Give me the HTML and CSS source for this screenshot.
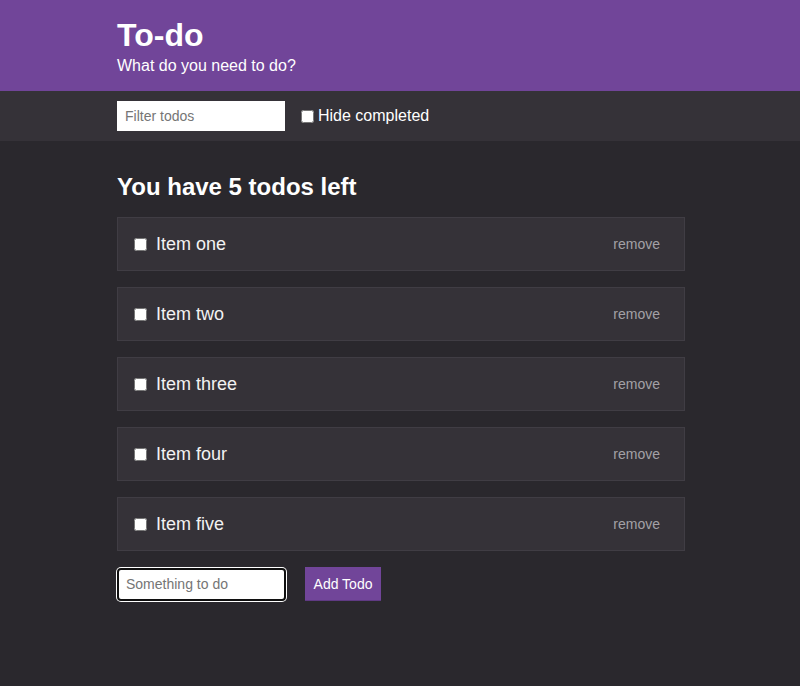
FILE: index.html
```html
<!DOCTYPE html>
<html>
<head>
<meta charset="utf-8">
<link rel="stylesheet" href="styles.css">
</head>
<body>
<header class="hero">
  <div class="wrap">
    <h1 class="title">To-do</h1>
    <p class="subtitle">What do you need to do?</p>
  </div>
</header>
<div class="filterbar">
  <div class="wrap filter-row">
    <input class="filter-input" type="text" placeholder="Filter todos">
    <label class="hide-label"><input type="checkbox" class="cb"> Hide completed</label>
  </div>
</div>
<main class="wrap main">
  <h2 class="count">You have 5 todos left</h2>
  <ul class="list">
    <li class="item"><label class="item-label"><input type="checkbox" class="cb"><span>Item one</span></label><button class="remove">remove</button></li>
    <li class="item"><label class="item-label"><input type="checkbox" class="cb"><span>Item two</span></label><button class="remove">remove</button></li>
    <li class="item"><label class="item-label"><input type="checkbox" class="cb"><span>Item three</span></label><button class="remove">remove</button></li>
    <li class="item"><label class="item-label"><input type="checkbox" class="cb"><span>Item four</span></label><button class="remove">remove</button></li>
    <li class="item"><label class="item-label"><input type="checkbox" class="cb"><span>Item five</span></label><button class="remove">remove</button></li>
  </ul>
  <form class="add-form">
    <input class="add-input" type="text" placeholder="Something to do">
    <button class="add-btn" type="button">Add Todo</button>
  </form>
</main>
</body>
</html>
```
FILE: styles.css
```css
* { box-sizing: border-box; }
html, body { margin: 0; padding: 0; }
body {
  background: #2a282d;
  color: #f2f2f2;
  font-family: "Liberation Sans", Arial, sans-serif;
  min-height: 686px;
}
.wrap {
  width: 568px;
  margin-left: 117px;
}
.hero {
  background: #714599;
  height: 91px;
  padding-top: 17px;
}
.title {
  margin: 0;
  font-size: 32px;
  line-height: 37px;
  font-weight: bold;
  color: #fff;
}
.subtitle {
  margin: 3px 0 0;
  font-size: 16px;
  line-height: 18px;
  color: #fff;
}
.filterbar {
  background: #353238;
  height: 50px;
  padding-top: 10px;
}
.filter-row {
  display: flex;
  align-items: center;
}
.filter-input {
  width: 168px;
  height: 30px;
  border: none;
  padding: 0 8px;
  font-family: "Liberation Sans", Arial, sans-serif;
  font-size: 14px;
  background: #fff;
  outline: none;
}
.filter-input::placeholder, .add-input::placeholder { color: #757575; }
.hide-label {
  margin-left: 16px;
  font-size: 16px;
  display: flex;
  align-items: center;
  color: #fff;
}
.cb {
  width: 13px;
  height: 13px;
  margin: 0 4px 0 0;
  accent-color: #fff;
}
.main {
  padding-top: 32px;
}
.count {
  margin: 0 0 16px;
  font-size: 24px;
  line-height: 28px;
  font-weight: bold;
  color: #fff;
}
.list {
  list-style: none;
  margin: 0;
  padding: 0;
  display: flex;
  flex-direction: column;
  gap: 16px;
}
.item {
  height: 54px;
  background: #353238;
  border: 1px solid #403d44;
  display: flex;
  align-items: center;
  justify-content: space-between;
  padding: 0 24px 0 16px;
}
.item-label {
  display: flex;
  align-items: center;
  font-size: 18px;
  color: #f2f2f2;
}
.item-label .cb { margin-right: 9px; }
.remove {
  background: none;
  border: none;
  padding: 0;
  color: #a3a1a6;
  font-family: "Liberation Sans", Arial, sans-serif;
  font-size: 14px;
}
.add-form {
  margin-top: 16px;
  display: flex;
  align-items: center;
  gap: 19px;
}
.add-input {
  width: 169px;
  height: 33px;
  border: 2px solid #101010;
  border-radius: 4px;
  box-shadow: 0 0 0 1px #fff;
  padding: 0 7px;
  font-family: "Liberation Sans", Arial, sans-serif;
  font-size: 14px;
  background: #fff;
  outline: none;
}
.add-btn {
  width: 76px;
  height: 34px;
  background: #714599;
  border: none;
  border-bottom: 1px solid #5f3a83;
  color: #fff;
  font-family: "Liberation Sans", Arial, sans-serif;
  font-size: 14px;
  padding: 0;
}
```
